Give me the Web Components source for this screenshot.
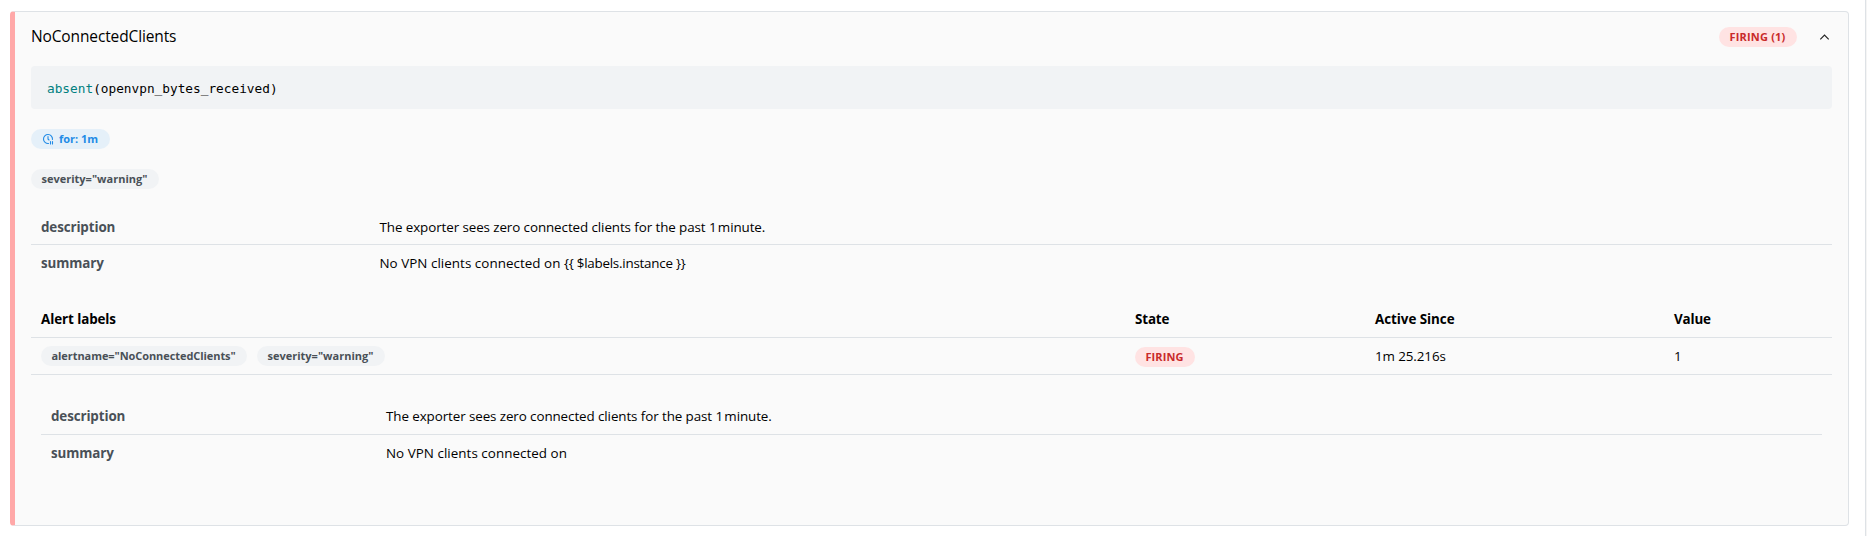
<!DOCTYPE html>
<html lang="en">
<head>
<meta charset="utf-8">
<title>Alerts</title>
<style>
  html, body { margin: 0; height: 100%; background: #fff; overflow: hidden; }
  body { font-family: "Open Sans", "Noto Sans", sans-serif; color: #000; }
  annotation-list > b { letter-spacing: -.12px; }
  annotation-list > span { letter-spacing: -.09px; }
  .tight { letter-spacing: -1.1px; }
</style>
</head>
<body>
<alerts-page>
  <rule-card>
    <span slot="name">NoConnectedClients</span>
    <state-badge slot="state" style="width:78px;letter-spacing:.19px">FIRING (1)</state-badge>
    <code-block><span style="color:#008080">absent</span>(openvpn_bytes_received)</code-block>
    <label-badge kind="info" style="width:79px;margin-top:20px"><clock-icon slot="icon"></clock-icon>for: 1m</label-badge>
    <label-badge style="width:128px;margin-top:20px">severity="warning"</label-badge>
    <annotation-list style="margin-top:20px;--key:338.5px;--first:36px">
      <b slot="k1">description</b><span slot="v1">The exporter sees zero connected clients for the past <span class="tight">1 </span>minute.</span>
      <b slot="k2">summary</b><span slot="v2" style="letter-spacing:.04px">No VPN clients connected on <span style="letter-spacing:-.24px">{{ $labels.instance }}</span></span>
    </annotation-list>
    <alert-table>
      <label-badge slot="labels" style="width:206px;letter-spacing:-.07px">alertname="NoConnectedClients"</label-badge>
      <label-badge slot="labels" style="width:128px">severity="warning"</label-badge>
      <state-badge slot="state" style="width:60px;letter-spacing:.08px">FIRING</state-badge>
      <span slot="since">1m 25.216s</span>
      <span slot="value">1</span>
    </alert-table>
    <annotation-list style="margin:23px 10px 0;--key:335px;--first:37px">
      <b slot="k1">description</b><span slot="v1">The exporter sees zero connected clients for the past <span class="tight">1 </span>minute.</span>
      <b slot="k2">summary</b><span slot="v2" style="letter-spacing:.04px">No VPN clients connected on</span>
    </annotation-list>
  </rule-card>
</alerts-page>

<script>
function define(name, markup) {
  const template = document.createElement('template');
  template.innerHTML = markup;
  customElements.define(name, class extends HTMLElement {
    constructor() {
      super();
      this.attachShadow({ mode: 'open' }).append(template.content.cloneNode(true));
    }
  });
}

define('alerts-page', `
  <style>
    :host { display: flex; height: 100%; box-sizing: border-box; }
    main { box-sizing: border-box; width: 1866px; padding: 11px 16px 10px 10px; border-right: 1px solid #dee2e6; }
    aside { width: 1px; background: #f5f5f5; }
  </style>
  <main><slot></slot></main><aside></aside>`);

define('rule-card', `
  <style>
    :host { display: block; box-sizing: border-box; height: 515px; background: #fafafa;
      border: 1px solid #dee2e6; border-left: 5px solid #ffa8a8; border-radius: 4px; padding: 0 16px; }
    header { display: flex; align-items: center; height: 54px; }
    .name { flex: 1; font-size: 15.5px; line-height: 24px; letter-spacing: -.13px; margin-bottom: 6px; }
    .state { display: flex; align-items: center; gap: 22px; padding-right: 2px; height: 20px; margin-bottom: 4px; }
    svg { display: block; width: 11px; height: 11px; }
    section { display: flex; flex-direction: column; align-items: flex-start; }
  </style>
  <header>
    <div class="name"><slot name="name"></slot></div>
    <div class="state"><slot name="state"></slot>
      <svg viewBox="0 0 11 11" fill="none" stroke="#222" stroke-width="1.15"><path d="M1.3 7.3 5.5 3.1 9.7 7.3"/></svg>
    </div>
  </header>
  <section><slot></slot></section>`);

define('code-block', `
  <style>
    :host { display: block; align-self: stretch; box-sizing: border-box; height: 43px; padding: 0 16px;
      border-radius: 4px; background: #f1f3f5; white-space: nowrap;
      font: 12.78px/45px "DejaVu Sans Mono", monospace; }
  </style><slot></slot>`);

const badgeBox = `
    :host { display: inline-flex; flex: none; box-sizing: border-box; height: 20px; padding: 0 10.5px; border-radius: 20px;
      align-items: center; white-space: nowrap; font-weight: 700; font-size: 11px; line-height: 18px;
      background: #f1f3f5; color: #495057; }`;

define('label-badge', `
  <style>${badgeBox}
    :host([kind="info"]) { background: #e5f0f9; color: #228be6; }
    ::slotted(clock-icon) { margin-right: 5.5px; }
  </style><slot name="icon"></slot><slot></slot>`);

define('state-badge', `
  <style>${badgeBox}
    :host { background: #ffe3e3; color: #c92a2a; }
  </style><slot></slot>`);

define('clock-icon', `
  <style>:host { display: block; width: 12px; height: 12px; } svg { display: block; }</style>
  <svg width="12" height="12" viewBox="0 0 24 24" fill="none" stroke="currentColor" stroke-width="2.2" stroke-linecap="round" stroke-linejoin="round">
    <path d="M20.942 13.018a9 9 0 1 0-7.909 7.922M12 7v5l2 2M17 17v5M21 17v5"/>
  </svg>`);

define('annotation-list', `
  <style>
    :host { display: block; align-self: stretch; font-size: 13.4px; line-height: 22px; }
    .row { display: grid; grid-template-columns: var(--key) 1fr; box-sizing: border-box; height: 36px; padding: 7px 10px; }
    .row:first-of-type { height: var(--first); border-bottom: 1px solid #dee2e6; }
    .key { color: #495057; }
  </style>
  <div class="row"><div class="key"><slot name="k1"></slot></div><div><slot name="v1"></slot></div></div>
  <div class="row"><div class="key"><slot name="k2"></slot></div><div><slot name="v2"></slot></div></div>`);

define('alert-table', `
  <style>
    :host { display: block; align-self: stretch; margin-top: 20px; font-size: 13.4px; line-height: 22px; }
    .row { display: grid; grid-template-columns: 1094px 240px 299px 1fr; box-sizing: border-box; height: 37px;
      padding: 7px 10px; border-bottom: 1px solid #dee2e6; }
    .head { font-weight: 700; letter-spacing: -.15px; }
    .labels { display: flex; gap: 10px; padding-top: 1px; }
    .state { display: flex; padding-top: 2px; }
    .since { letter-spacing: -.1px; }
  </style>
  <div class="row head"><div style="letter-spacing:-.08px">Alert labels</div><div>State</div><div style="letter-spacing:-.05px">Active Since</div><div>Value</div></div>
  <div class="row">
    <div class="labels"><slot name="labels"></slot></div>
    <div class="state"><slot name="state"></slot></div>
    <div class="since"><slot name="since"></slot></div>
    <div><slot name="value"></slot></div>
  </div>`);
</script>
</body>
</html>
